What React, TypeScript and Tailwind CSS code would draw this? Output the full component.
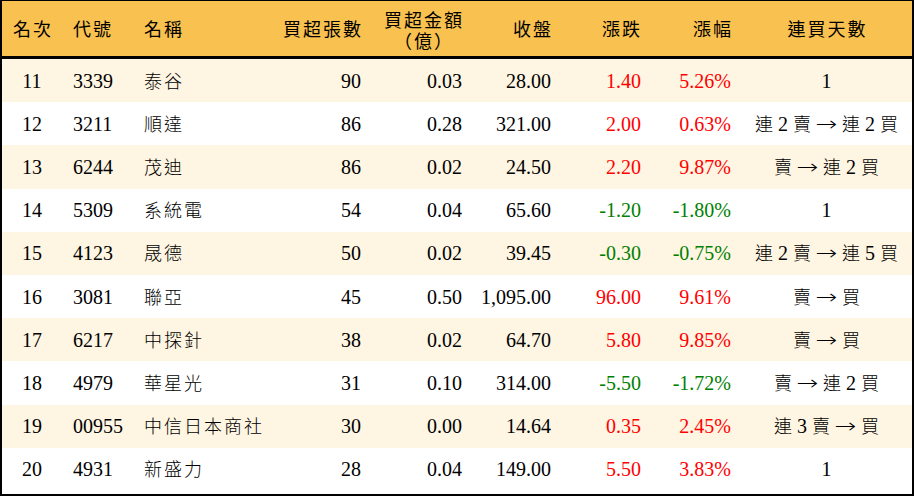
import React from "react";

type Row = {
  rank: string;
  code: string;
  name: string;
  vol: string;
  amt: string;
  close: string;
  chg: string;
  pct: string;
  days: string;
};

const rows: Row[] = [
  { rank: "11", code: "3339", name: "泰谷", vol: "90", amt: "0.03", close: "28.00", chg: "1.40", pct: "5.26%", days: "1" },
  { rank: "12", code: "3211", name: "順達", vol: "86", amt: "0.28", close: "321.00", chg: "2.00", pct: "0.63%", days: "連 2 賣 → 連 2 買" },
  { rank: "13", code: "6244", name: "茂迪", vol: "86", amt: "0.02", close: "24.50", chg: "2.20", pct: "9.87%", days: "賣 → 連 2 買" },
  { rank: "14", code: "5309", name: "系統電", vol: "54", amt: "0.04", close: "65.60", chg: "-1.20", pct: "-1.80%", days: "1" },
  { rank: "15", code: "4123", name: "晟德", vol: "50", amt: "0.02", close: "39.45", chg: "-0.30", pct: "-0.75%", days: "連 2 賣 → 連 5 買" },
  { rank: "16", code: "3081", name: "聯亞", vol: "45", amt: "0.50", close: "1,095.00", chg: "96.00", pct: "9.61%", days: "賣 → 買" },
  { rank: "17", code: "6217", name: "中探針", vol: "38", amt: "0.02", close: "64.70", chg: "5.80", pct: "9.85%", days: "賣 → 買" },
  { rank: "18", code: "4979", name: "華星光", vol: "31", amt: "0.10", close: "314.00", chg: "-5.50", pct: "-1.72%", days: "賣 → 連 2 買" },
  { rank: "19", code: "00955", name: "中信日本商社", vol: "30", amt: "0.00", close: "14.64", chg: "0.35", pct: "2.45%", days: "連 3 賣 → 買" },
  { rank: "20", code: "4931", name: "新盛力", vol: "28", amt: "0.04", close: "149.00", chg: "5.50", pct: "3.83%", days: "1" },
];

const grid =
  "grid grid-cols-[60px_72px_126px_111px_101px_89px_90px_90px_171px] items-center";

function Cjk({ children, className = "" }: { children: React.ReactNode; className?: string }) {
  return (
    <span
      className={`text-[18px] tracking-[2px] font-light ${className}`}
      style={{ fontFamily: '"Noto Sans CJK TC", sans-serif' }}
    >
      {children}
    </span>
  );
}

function Arrow() {
  return (
    <span
      className="inline-block text-[20px] scale-x-[1.3] px-[2px] font-extralight"
      style={{ fontFamily: '"DejaVu Sans", sans-serif' }}
    >
      →
    </span>
  );
}

function Days({ text }: { text: string }) {
  const parts = text.split(" ");
  return (
    <span className="whitespace-nowrap">
      {parts.map((p, i) => (
        <React.Fragment key={i}>
          {i > 0 ? " " : ""}
          {p === "→" ? <Arrow /> : /[0-9]/.test(p) ? <span>{p}</span> : <Cjk className="tracking-normal">{p}</Cjk>}
        </React.Fragment>
      ))}
    </span>
  );
}

export default function App() {
  return (
    <div
      className="w-[914px] h-[496px] bg-white border-black border-t border-l-2 border-r-2 border-b-2 text-[20px] text-black leading-none"
      style={{ fontFamily: '"Liberation Serif", "Noto Sans CJK TC", serif' }}
    >
      <div className={`${grid} h-[58px] bg-[#f9c14f] border-b-[3px] border-black`}>
        <div className="text-center pl-[2px]"><Cjk className="font-normal">名次</Cjk></div>
        <div className="pl-[11px]"><Cjk className="font-normal">代號</Cjk></div>
        <div className="pl-[10px]"><Cjk className="font-normal">名稱</Cjk></div>
        <div className="text-right pr-[8px]"><Cjk className="font-normal">買超張數</Cjk></div>
        <div className="flex justify-end pr-[8px]">
          <div className="flex flex-col items-center gap-[1px] pt-[1px]">
            <Cjk className="font-normal leading-[20px]">買超金額</Cjk>
            <Cjk className="font-normal leading-[20px] tracking-[0px]">（億）</Cjk>
          </div>
        </div>
        <div className="text-right pr-[8px]"><Cjk className="font-normal">收盤</Cjk></div>
        <div className="text-right pr-[9px]"><Cjk className="font-normal">漲跌</Cjk></div>
        <div className="text-right pr-[8px]"><Cjk className="font-normal">漲幅</Cjk></div>
        <div className="text-center pl-[2px]"><Cjk className="font-normal">連買天數</Cjk></div>
      </div>
      {rows.map((r, i) => {
        const up = !r.chg.startsWith("-");
        const color = up ? "text-[#ff0000]" : "text-[#008000]";
        return (
          <div
            key={r.rank}
            className={`${grid} h-[43.2px] ${i % 2 === 0 ? "bg-[#fef5e2]" : "bg-white"}`}
          >
            <div className="text-center">{r.rank}</div>
            <div className="pl-[11px]">{r.code}</div>
            <div className="pl-[10px] whitespace-nowrap"><Cjk>{r.name}</Cjk></div>
            <div className="text-right pr-[10px]">{r.vol}</div>
            <div className="text-right pr-[10px]">{r.amt}</div>
            <div className="text-right pr-[10px]">{r.close}</div>
            <div className={`text-right pr-[10px] ${color}`}>{r.chg}</div>
            <div className={`text-right pr-[10px] ${color}`}>{r.pct}</div>
            <div className="text-center"><Days text={r.days} /></div>
          </div>
        );
      })}
    </div>
  );
}
